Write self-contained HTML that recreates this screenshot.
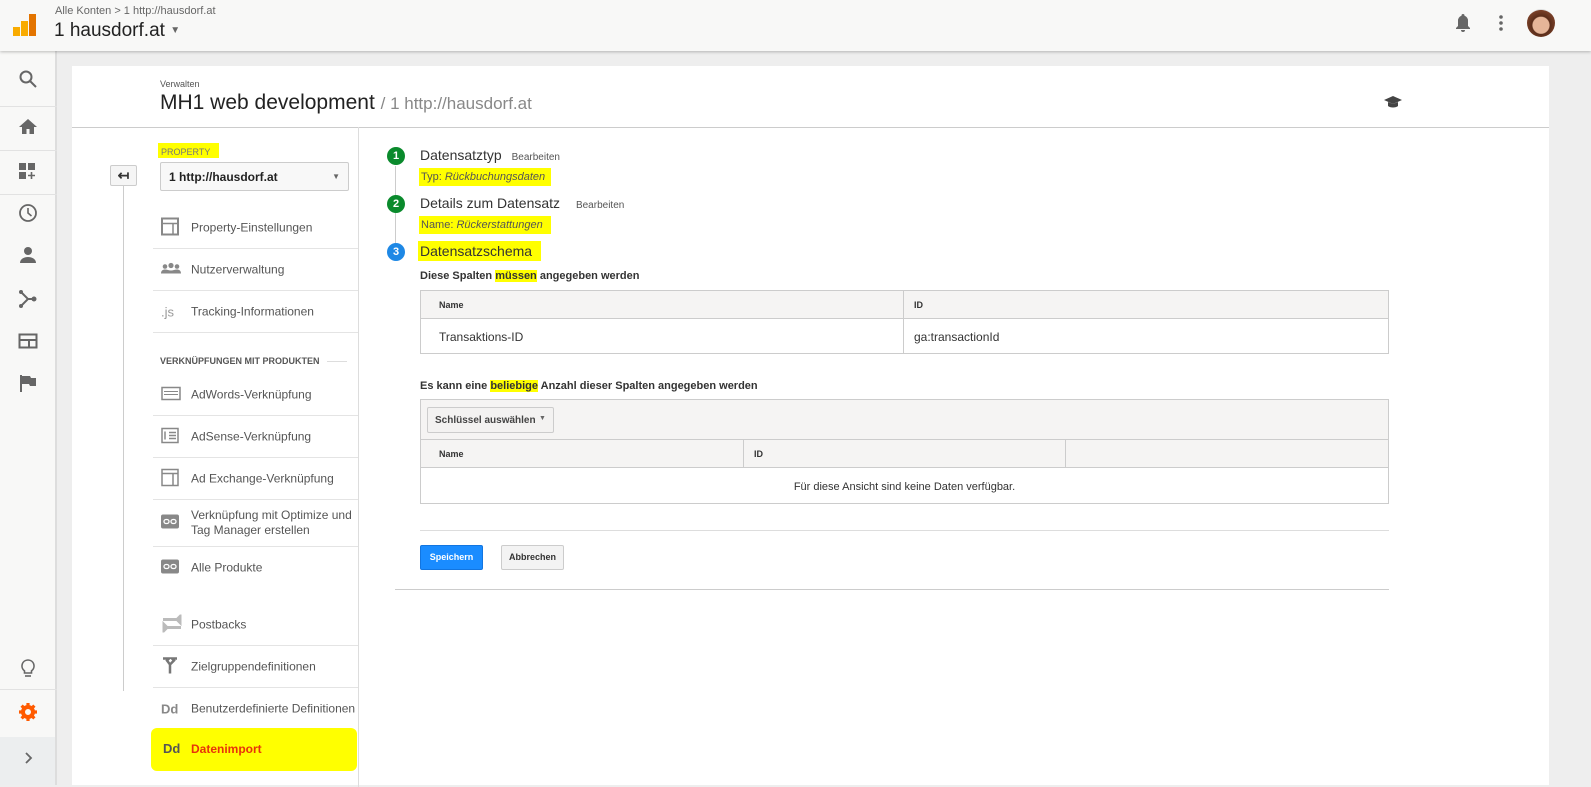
<!DOCTYPE html>
<html><head><meta charset="utf-8"><style>
*{box-sizing:border-box;margin:0;padding:0}
body{width:1591px;height:785px;overflow:hidden;background:#eeeeee;font-family:"Liberation Sans",Arial,sans-serif;color:#333;position:relative}
.top{position:absolute;left:0;top:0;width:1591px;height:51px;background:#f8f8f7;box-shadow:0 1px 3px rgba(0,0,0,.25);z-index:5}
.nav{position:absolute;left:0;top:51px;width:57px;height:734px;background:#f8f8f7;border-right:2px solid #ddd}
.nav .sep{position:absolute;left:0;width:57px;border-top:1px solid #e2e2e2}
.nav svg{position:absolute;left:18px}
.card{position:absolute;left:72px;top:66px;width:1477px;height:719px;background:#fff}
.abs{position:absolute;white-space:nowrap}
.hl{background:#ffff00}
.item{position:absolute;left:153px;width:205px;height:42px;border-bottom:1px solid #e4e4e4;font-size:12px;color:#555}
.item span{position:absolute;left:38px;top:50%;transform:translateY(-50%);line-height:15px;white-space:nowrap}
.item i{position:absolute;left:8px;top:50%;transform:translateY(-50%);font-style:normal;color:#888;font-weight:bold;font-size:13px}
.th{background:#f5f4f3;font-weight:bold;font-size:10px;color:#444}
</style></head><body>
<div class="top">
  <svg class="abs" style="left:13px;top:14px" width="23" height="22"><rect x="0" y="13" width="7" height="9" fill="#f9ab00"/><rect x="8" y="7" width="7" height="15" fill="#f9ab00"/><rect x="16" y="0" width="7" height="22" fill="#e37400"/></svg>
  <div class="abs" style="left:55px;top:5px;font-size:11px;color:#666">Alle Konten &gt; 1 http://hausdorf.at</div>
  <div class="abs" style="left:54px;top:20px;font-size:19px;color:#222">1 hausdorf.at <span style="font-size:10px;color:#666;vertical-align:3px">▼</span></div>
  <svg class="abs" style="left:1455px;top:13px" width="16" height="19"><path d="M8 1a1.5 1.5 0 0 1 1.5 1.5v.3A5 5 0 0 1 13 8v5l2 2v1H1v-1l2-2V8a5 5 0 0 1 3.5-5.2v-.3A1.5 1.5 0 0 1 8 1zM6 17h4a2 2 0 0 1-4 0z" fill="#666"/></svg>
  <svg class="abs" style="left:1498px;top:14px" width="6" height="18"><circle cx="3" cy="3" r="1.8" fill="#666"/><circle cx="3" cy="9" r="1.8" fill="#666"/><circle cx="3" cy="15" r="1.8" fill="#666"/></svg>
  <div class="abs" style="left:1527px;top:9px;width:28px;height:28px;border-radius:50%;background:radial-gradient(circle at 50% 58%,#e6b598 0 38%,#5a2d1a 42%,#7a4028 70%,#ddd 72%)"></div>
</div>
<div class="nav">
  <svg style="top:18px" width="20" height="20"><circle cx="8" cy="8" r="5.5" stroke="#666" stroke-width="2" fill="none"/><path d="M12 12l6 6" stroke="#666" stroke-width="2"/></svg>
  <div class="sep" style="top:55px"></div>
  <svg style="top:66px" width="20" height="18"><path d="M10 2L1 10h3v7h4.5v-5h3v5H16v-7h3z" fill="#666"/></svg>
  <div class="sep" style="top:99px"></div>
  <svg style="top:111px" width="20" height="18"><rect x="1" y="1" width="7" height="7" fill="#666"/><rect x="10" y="1" width="7" height="7" fill="#666"/><rect x="1" y="10" width="7" height="7" fill="#666"/><path d="M13.5 10v7M10 13.5h7" stroke="#666" stroke-width="1.6"/></svg>
  <div class="sep" style="top:143px"></div>
  <svg style="top:152px" width="20" height="20"><circle cx="10" cy="10" r="8" stroke="#666" stroke-width="1.8" fill="none"/><path d="M10 5v5l3.5 3" stroke="#666" stroke-width="1.6" fill="none"/></svg>
  <svg style="top:194px" width="20" height="20"><circle cx="10" cy="6" r="4" fill="#666"/><path d="M2 18c0-4 4-6 8-6s8 2 8 6z" fill="#666"/></svg>
  <svg style="top:238px" width="20" height="20"><path d="M3 3l7 7-7 7M10 10h6" stroke="#666" stroke-width="2" fill="none"/><circle cx="16" cy="10" r="2.5" fill="#666"/><circle cx="3" cy="3" r="2" fill="#666"/><circle cx="3" cy="17" r="2" fill="#666"/></svg>
  <svg style="top:281px" width="20" height="18"><rect x="1.5" y="2.5" width="17" height="13" stroke="#666" stroke-width="2" fill="none"/><path d="M1.5 8h17M11 8v7" stroke="#666" stroke-width="2"/></svg>
  <svg style="top:322px" width="20" height="20"><path d="M3 2v17" stroke="#666" stroke-width="2"/><path d="M4 3h8l1 2h5v8h-6l-1-2H4z" fill="#666"/></svg>
  <div class="sep" style="top:638px"></div>
  <svg style="top:607px" width="20" height="22"><path d="M10 2a6 6 0 0 0-3.5 10.9V15h7v-2.1A6 6 0 0 0 10 2z" stroke="#666" stroke-width="1.6" fill="none"/><path d="M7 18h6" stroke="#666" stroke-width="1.6"/></svg>
  <div class="sep" style="top:686px;border-color:#ddd"></div>
  <svg style="top:651px" width="20" height="20"><circle cx="10" cy="10" r="5" stroke="#ff5a00" stroke-width="4" fill="none"/><path d="M10 1v4M10 15v4M1 10h4M15 10h4M3.6 3.6l2.8 2.8M13.6 13.6l2.8 2.8M3.6 16.4l2.8-2.8M13.6 6.4l2.8-2.8" stroke="#ff5a00" stroke-width="3.2"/></svg>
  <div class="abs" style="left:0;top:686px;width:55px;height:48px;background:#eceeef"></div>
  <svg style="top:697px" width="20" height="20"><path d="M8 5l5 5-5 5" stroke="#666" stroke-width="1.8" fill="none"/></svg>
</div>

<div class="card">
  <div class="abs" style="left:88px;top:13px;font-size:9px;color:#555">Verwalten</div>
  <div class="abs" style="left:88px;top:25px;font-size:21px;color:#222;white-space:nowrap">MH1 web development <span style="font-size:17px;color:#888">/ 1 http://hausdorf.at</span></div>
  <svg class="abs" style="left:1311px;top:29px" width="20" height="14"><path d="M10 1L1 5l9 4 9-4z" fill="#444"/><path d="M5 7v4c2 2 8 2 10 0V7l-5 2z" fill="#444"/></svg>
  <div class="abs" style="left:0;top:61px;width:1477px;border-top:1px solid #ccc"></div>
  <div class="abs" style="left:286px;top:61px;height:660px;border-left:1px solid #ddd"></div>
  <div class="abs" style="left:51px;top:118px;height:507px;border-left:1px solid #ccc"></div>
  <div class="abs" style="left:38px;top:99px;width:27px;height:21px;background:#f5f5f5;border:1px solid #ccc;border-radius:2px;font-size:14px;text-align:center;line-height:18px;font-weight:bold">↤</div>
</div>

<div class="abs hl" style="left:158px;top:143px;width:61px;height:15px"></div>
<div class="abs" style="left:161px;top:147px;font-size:9px;color:#777">PROPERTY</div>
<div class="abs" style="left:160px;top:162px;width:189px;height:29px;border:1px solid #ccc;border-radius:2px;background:#f8f8f8;font-size:12px;font-weight:bold;padding:7px 0 0 8px;color:#222">1 http://hausdorf.at<span style="position:absolute;right:8px;top:9px;font-size:8px;color:#666">▼</span></div>

<div class="item" style="top:207px"><i><svg width="18" height="18"><rect x="1" y="1" width="16" height="16" stroke="#888" stroke-width="2" fill="none"/><path d="M1 6h16M12 6v11" stroke="#888" stroke-width="1.5"/></svg></i><span>Property-Einstellungen</span></div>
<div class="item" style="top:249px"><i><svg width="20" height="12"><circle cx="4" cy="4" r="2.3" fill="#888"/><circle cx="10" cy="3" r="2.6" fill="#888"/><circle cx="16" cy="4" r="2.3" fill="#888"/><path d="M0 11c0-3 2-4 4-4s4 1 6 1 4-1 6-1 4 1 4 4z" fill="#888"/></svg></i><span>Nutzerverwaltung</span></div>
<div class="item" style="top:291px"><i style="font-weight:normal;color:#999">.js</i><span>Tracking-Informationen</span></div>
<div class="abs" style="left:160px;top:356px;font-size:9px;font-weight:bold;color:#555">VERKNÜPFUNGEN MIT PRODUKTEN</div>
<div class="abs" style="left:327px;top:361px;width:20px;border-top:1px solid #ddd"></div>
<div class="item" style="top:374px"><i><svg width="20" height="14"><rect x="1" y="1" width="18" height="12" stroke="#888" stroke-width="1.5" fill="none"/><path d="M3 5h14M3 8h14" stroke="#888"/></svg></i><span>AdWords-Verknüpfung</span></div>
<div class="item" style="top:416px"><i><svg width="18" height="16"><rect x="1" y="1" width="16" height="14" stroke="#888" stroke-width="1.5" fill="none"/><path d="M4 4v8M8 5h7M8 8h7M8 11h7" stroke="#888" stroke-width="1.5"/></svg></i><span>AdSense-Verknüpfung</span></div>
<div class="item" style="top:458px"><i><svg width="18" height="18"><rect x="1" y="1" width="16" height="16" stroke="#888" stroke-width="1.5" fill="none"/><path d="M1 5h16M12 5v12" stroke="#888" stroke-width="1.5"/></svg></i><span>Ad Exchange-Verknüpfung</span></div>
<div class="item" style="top:500px;height:47px"><i><svg width="18" height="14"><rect x="0" y="0" width="18" height="14" rx="2" fill="#888"/><rect x="3" y="5" width="5" height="4" rx="2" stroke="#fff" stroke-width="1.3" fill="none"/><rect x="10" y="5" width="5" height="4" rx="2" stroke="#fff" stroke-width="1.3" fill="none"/></svg></i><span>Verknüpfung mit Optimize und<br>Tag Manager erstellen</span></div>
<div class="item" style="top:547px;border:none"><i><svg width="18" height="14"><rect x="0" y="0" width="18" height="14" rx="2" fill="#888"/><rect x="3" y="5" width="5" height="4" rx="2" stroke="#fff" stroke-width="1.3" fill="none"/><rect x="10" y="5" width="5" height="4" rx="2" stroke="#fff" stroke-width="1.3" fill="none"/></svg></i><span>Alle Produkte</span></div>
<div class="item" style="top:604px"><i><svg width="22" height="18"><path d="M2 5h14l3-3v6l-3-3M20 13H6l-3 3v-6l3 3" stroke="#bbb" stroke-width="3" fill="none"/></svg></i><span>Postbacks</span></div>
<div class="item" style="top:646px"><i><svg width="18" height="18"><path d="M2 2h6l-2 2 3 4v9M16 2h-5l2 2-4 4" stroke="#777" stroke-width="2.5" fill="none"/></svg></i><span>Zielgruppendefinitionen</span></div>
<div class="item" style="top:688px;border:none"><i>Dd</i><span>Benutzerdefinierte Definitionen</span></div>
<div class="abs hl" style="left:151px;top:728px;width:206px;height:43px;border-radius:6px"></div>
<div class="abs" style="left:163px;top:741px;font-size:13px;font-weight:bold;color:#555">Dd</div>
<div class="abs" style="left:191px;top:742px;font-size:12px;font-weight:bold;color:#e8330a">Datenimport</div>

<!-- steps -->
<div class="abs" style="left:395px;top:166px;height:84px;border-left:1px solid #ccc"></div>
<div class="abs" style="left:387px;top:147px;width:18px;height:18px;border-radius:50%;background:#0a8a2c;color:#fff;font-size:11px;font-weight:bold;text-align:center;line-height:18px">1</div>
<div class="abs" style="left:420px;top:147px;font-size:14px;color:#333">Datensatztyp <span style="font-size:10px;color:#555;margin-left:6px">Bearbeiten</span></div>
<div class="abs hl" style="left:419px;top:168px;width:132px;height:18px"></div>
<div class="abs" style="left:421px;top:171px;font-size:11px;color:#555">Typ: <i>Rückbuchungsdaten</i></div>
<div class="abs" style="left:387px;top:195px;width:18px;height:18px;border-radius:50%;background:#0a8a2c;color:#fff;font-size:11px;font-weight:bold;text-align:center;line-height:18px">2</div>
<div class="abs" style="left:420px;top:195px;font-size:14px;color:#333">Details zum Datensatz <span style="font-size:10px;color:#555;margin-left:12px">Bearbeiten</span></div>
<div class="abs hl" style="left:419px;top:216px;width:132px;height:18px"></div>
<div class="abs" style="left:421px;top:219px;font-size:11px;color:#555">Name: <i>Rückerstattungen</i></div>
<div class="abs" style="left:387px;top:243px;width:18px;height:18px;border-radius:50%;background:#1e88e5;color:#fff;font-size:11px;font-weight:bold;text-align:center;line-height:18px">3</div>
<div class="abs hl" style="left:418px;top:241px;width:123px;height:20px"></div>
<div class="abs" style="left:420px;top:243px;font-size:14px;color:#333">Datensatzschema</div>
<div class="abs" style="left:420px;top:270px;font-size:11px;font-weight:bold;color:#333">Diese Spalten <span class="hl">müssen</span> angegeben werden</div>

<div class="abs" style="left:420px;top:290px;width:969px;height:64px;border:1px solid #ccc">
  <div class="abs th" style="left:0;top:0;width:967px;height:28px;border-bottom:1px solid #ccc"></div>
  <div class="abs" style="left:482px;top:0;height:62px;border-left:1px solid #ccc"></div>
  <div class="abs" style="left:18px;top:9px;font-size:9px;font-weight:bold">Name</div>
  <div class="abs" style="left:493px;top:9px;font-size:9px;font-weight:bold">ID</div>
  <div class="abs" style="left:18px;top:39px;font-size:12px">Transaktions-ID</div>
  <div class="abs" style="left:493px;top:39px;font-size:12px">ga:transactionId</div>
</div>

<div class="abs" style="left:420px;top:380px;font-size:11px;font-weight:bold;color:#333">Es kann eine <span class="hl">beliebige</span> Anzahl dieser Spalten angegeben werden</div>
<div class="abs" style="left:420px;top:399px;width:969px;height:105px;border:1px solid #ccc">
  <div class="abs th" style="left:0;top:0;width:967px;height:68px;border-bottom:1px solid #ccc"></div>
  <div class="abs" style="left:6px;top:7px;width:127px;height:26px;border:1px solid #ccc;border-radius:2px;background:#f3f2f1;font-size:10px;font-weight:bold;padding:7px 0 0 7px;color:#444">Schlüssel auswählen</div>
  <div class="abs" style="left:118px;top:15px;font-size:7px;color:#666">▼</div>
  <div class="abs" style="left:0;top:39px;width:967px;border-top:1px solid #ccc"></div>
  <div class="abs" style="left:322px;top:39px;height:29px;border-left:1px solid #ccc"></div>
  <div class="abs" style="left:644px;top:39px;height:29px;border-left:1px solid #ccc"></div>
  <div class="abs" style="left:18px;top:49px;font-size:9px;font-weight:bold">Name</div>
  <div class="abs" style="left:333px;top:49px;font-size:9px;font-weight:bold">ID</div>
  <div class="abs" style="left:0;top:81px;width:967px;text-align:center;font-size:11px">Für diese Ansicht sind keine Daten verfügbar.</div>
</div>
<div class="abs" style="left:420px;top:530px;width:969px;border-top:1px solid #ddd"></div>
<div class="abs" style="left:420px;top:545px;width:63px;height:25px;background:#1a8cff;border:1px solid #1275e0;border-radius:2px;color:#fff;font-size:9px;font-weight:bold;text-align:center;line-height:23px">Speichern</div>
<div class="abs" style="left:501px;top:545px;width:63px;height:25px;background:#f3f3f3;border:1px solid #ccc;border-radius:2px;color:#333;font-size:9px;font-weight:bold;text-align:center;line-height:23px">Abbrechen</div>
<div class="abs" style="left:395px;top:589px;width:994px;border-top:1px solid #ccc"></div>
</body></html>
